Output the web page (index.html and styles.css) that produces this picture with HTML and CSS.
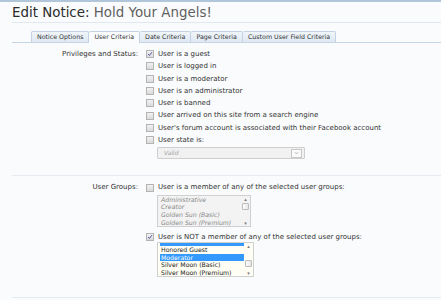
FILE: index.html
```html
<!DOCTYPE html>
<html lang="en">
<head>
  <meta charset="UTF-8">
  <title>Edit Notice</title>
  <link rel="stylesheet" href="styles.css">
</head>
<body>
  <div class="topbar"></div>
  <div class="page">
    <h1 class="title">Edit Notice: <span class="title-name">Hold Your Angels!</span></h1>

    <ul class="tabs">
      <li class="tab">Notice Options</li>
      <li class="tab active">User Criteria</li>
      <li class="tab">Date Criteria</li>
      <li class="tab">Page Criteria</li>
      <li class="tab">Custom User Field Criteria</li>
    </ul>

    <div class="section first">
      <div class="form-row">
        <div class="row-label">Privileges and Status:</div>
        <div class="row-input">
          <div class="choice"><span class="box checked"><svg viewBox="0 0 7 7"><path d="M1.3 3.6 L2.8 5.2 L5.8 1.3" fill="none" stroke="#4d4da6" stroke-width="1.1"/></svg></span>User is a guest</div>
          <div class="choice"><span class="box"></span>User is logged in</div>
          <div class="choice"><span class="box"></span>User is a moderator</div>
          <div class="choice"><span class="box"></span>User is an administrator</div>
          <div class="choice"><span class="box"></span>User is banned</div>
          <div class="choice"><span class="box"></span>User arrived on this site from a search engine</div>
          <div class="choice"><span class="box"></span>User's forum account is associated with their Facebook account</div>
          <div class="choice"><span class="box"></span>User state is:</div>
          <div class="dropdown">
            <span class="dropdown-value">Valid</span>
            <span class="dropdown-btn"><svg viewBox="0 0 6 4"><path d="M1 1 L3 3 L5 1" fill="none" stroke="#999" stroke-width="0.8"/></svg></span>
          </div>
        </div>
      </div>
    </div>

    <div class="section second">
      <div class="form-row">
        <div class="row-label">User Groups:</div>
        <div class="row-input">
          <div class="choice"><span class="box"></span>User is a member of any of the selected user groups:</div>
          <div class="listbox disabled">
            <div class="list-items">
              <div class="list-item">Administrative</div>
              <div class="list-item">Creator</div>
              <div class="list-item">Golden Sun (Basic)</div>
              <div class="list-item">Golden Sun (Premium)</div>
            </div>
            <div class="scrollbar">
              <span class="arrow">&#9652;</span>
              <span class="thumb top"></span>
              <span class="arrow down">&#9662;</span>
            </div>
          </div>

          <div class="choice spaced"><span class="box checked"><svg viewBox="0 0 7 7"><path d="M1.3 3.6 L2.8 5.2 L5.8 1.3" fill="none" stroke="#4d4da6" stroke-width="1.1"/></svg></span>User is NOT a member of any of the selected user groups:</div>
          <div class="listbox active-list">
            <div class="list-items">
              <div class="list-item partial"></div>
              <div class="list-item">Honored Guest</div>
              <div class="list-item selected">Moderator</div>
              <div class="list-item">Silver Moon (Basic)</div>
              <div class="list-item">Silver Moon (Premium)</div>
            </div>
            <div class="scrollbar">
              <span class="arrow">&#9652;</span>
              <span class="thumb middle"></span>
              <span class="arrow down">&#9662;</span>
            </div>
          </div>
        </div>
      </div>
    </div>
  </div>
</body>
</html>
```

FILE: styles.css
```css
body {
  margin: 0;
  background: #fafbfd;
  color: #333;
  font-family: "DejaVu Sans", Verdana, sans-serif;
}

.topbar {
  height: 2px;
  background: #b2c6da;
}

.page {
  padding-left: 12px;
}

.title {
  margin: 0;
  padding-top: 2px;
  font-size: 13.4px;
  font-weight: normal;
  line-height: 18px;
  color: #2b2b2b;
  border-bottom: 1px solid #e2e8ef;
}

.title-name {
  color: #5f5f5f;
}

.tabs {
  list-style: none;
  margin: 8px 0 0;
  padding: 0 0 0 19px;
  display: flex;
  border-bottom: 1px solid #c6d5e5;
}

.tab {
  font-size: 6.3px;
  line-height: 10px;
  padding: 0 5px;
  color: #333;
  background: linear-gradient(#f0f5fa, #dfe8f2);
  border: 1px solid #c3d2e2;
  border-bottom: none;
  border-left: none;
  border-radius: 2px 2px 0 0;
}

.tab:first-child {
  border-left: 1px solid #c3d2e2;
}

.tab.active {
  background: #fafbfd;
  margin-bottom: -1px;
  padding-bottom: 1px;
}

.section {
  border-bottom: 1px solid #e6ebf1;
}

.section.first {
  padding: 5px 0 16px;
}

.section.second {
  padding: 5px 0 20px;
}

.form-row {
  display: grid;
  grid-template-columns: 126px 1fr;
  column-gap: 8px;
  font-size: 7px;
  line-height: 12.3px;
}

.row-label {
  text-align: right;
  color: #333;
}

.choice {
  display: flex;
  align-items: center;
  gap: 4px;
  color: #333;
}

.choice.spaced {
  margin-top: 4px;
}

.box {
  width: 6px;
  height: 6px;
  border: 1px solid #b4b4b4;
  background: linear-gradient(#f2f2f2, #dadada);
  display: flex;
}

.box svg {
  width: 6px;
  height: 6px;
}

.dropdown {
  margin: 1px 0 0 11px;
  width: 146px;
  height: 10px;
  border: 1px solid #cfcfcf;
  background: #f1f1f1;
  display: flex;
  align-items: center;
  justify-content: space-between;
  border-radius: 1px;
}

.dropdown-value {
  font-size: 6px;
  font-style: italic;
  color: #a0a0a0;
  padding-left: 6px;
}

.dropdown-btn {
  width: 9px;
  height: 7px;
  margin-right: 2px;
  border: 1px solid #c8c8c8;
  background: #fafafa;
  display: flex;
  align-items: center;
  justify-content: center;
}

.dropdown-btn svg {
  width: 5px;
  height: 4px;
}

.listbox {
  margin: 1px 0 0 11px;
  display: flex;
  border: 1px solid #d0d0d0;
  overflow: hidden;
}

.listbox.disabled {
  width: 92px;
  height: 30px;
  background: #f3f3f3;
}

.listbox.active-list {
  margin-top: -1px;
  width: 95px;
  height: 33px;
  background: #fffef4;
}

.list-items {
  flex: 1;
  padding-left: 2px;
  font-size: 6.2px;
  line-height: 7.7px;
}

.disabled .list-item {
  font-style: italic;
  color: #8a8a8a;
  padding-left: 1px;
}

.active-list .list-item {
  color: #222;
  padding-left: 1px;
}

.active-list .list-item.partial {
  height: 3px;
  background: #3399ff;
}

.active-list .list-item.selected {
  background: #3399ff;
  color: #fff;
}

.scrollbar {
  width: 9px;
  display: flex;
  flex-direction: column;
  align-items: center;
  font-size: 5px;
  line-height: 6px;
  color: #777;
}

.arrow.down {
  margin-top: auto;
}

.thumb {
  width: 7px;
  height: 7px;
  border: 1px solid #bcbcbc;
  border-radius: 1px;
  background: linear-gradient(90deg, #fdfdfd, #e6e6e6);
  box-sizing: border-box;
}

.thumb.top {
  margin-top: 1px;
}

.thumb.middle {
  margin-top: 11px;
}
```
